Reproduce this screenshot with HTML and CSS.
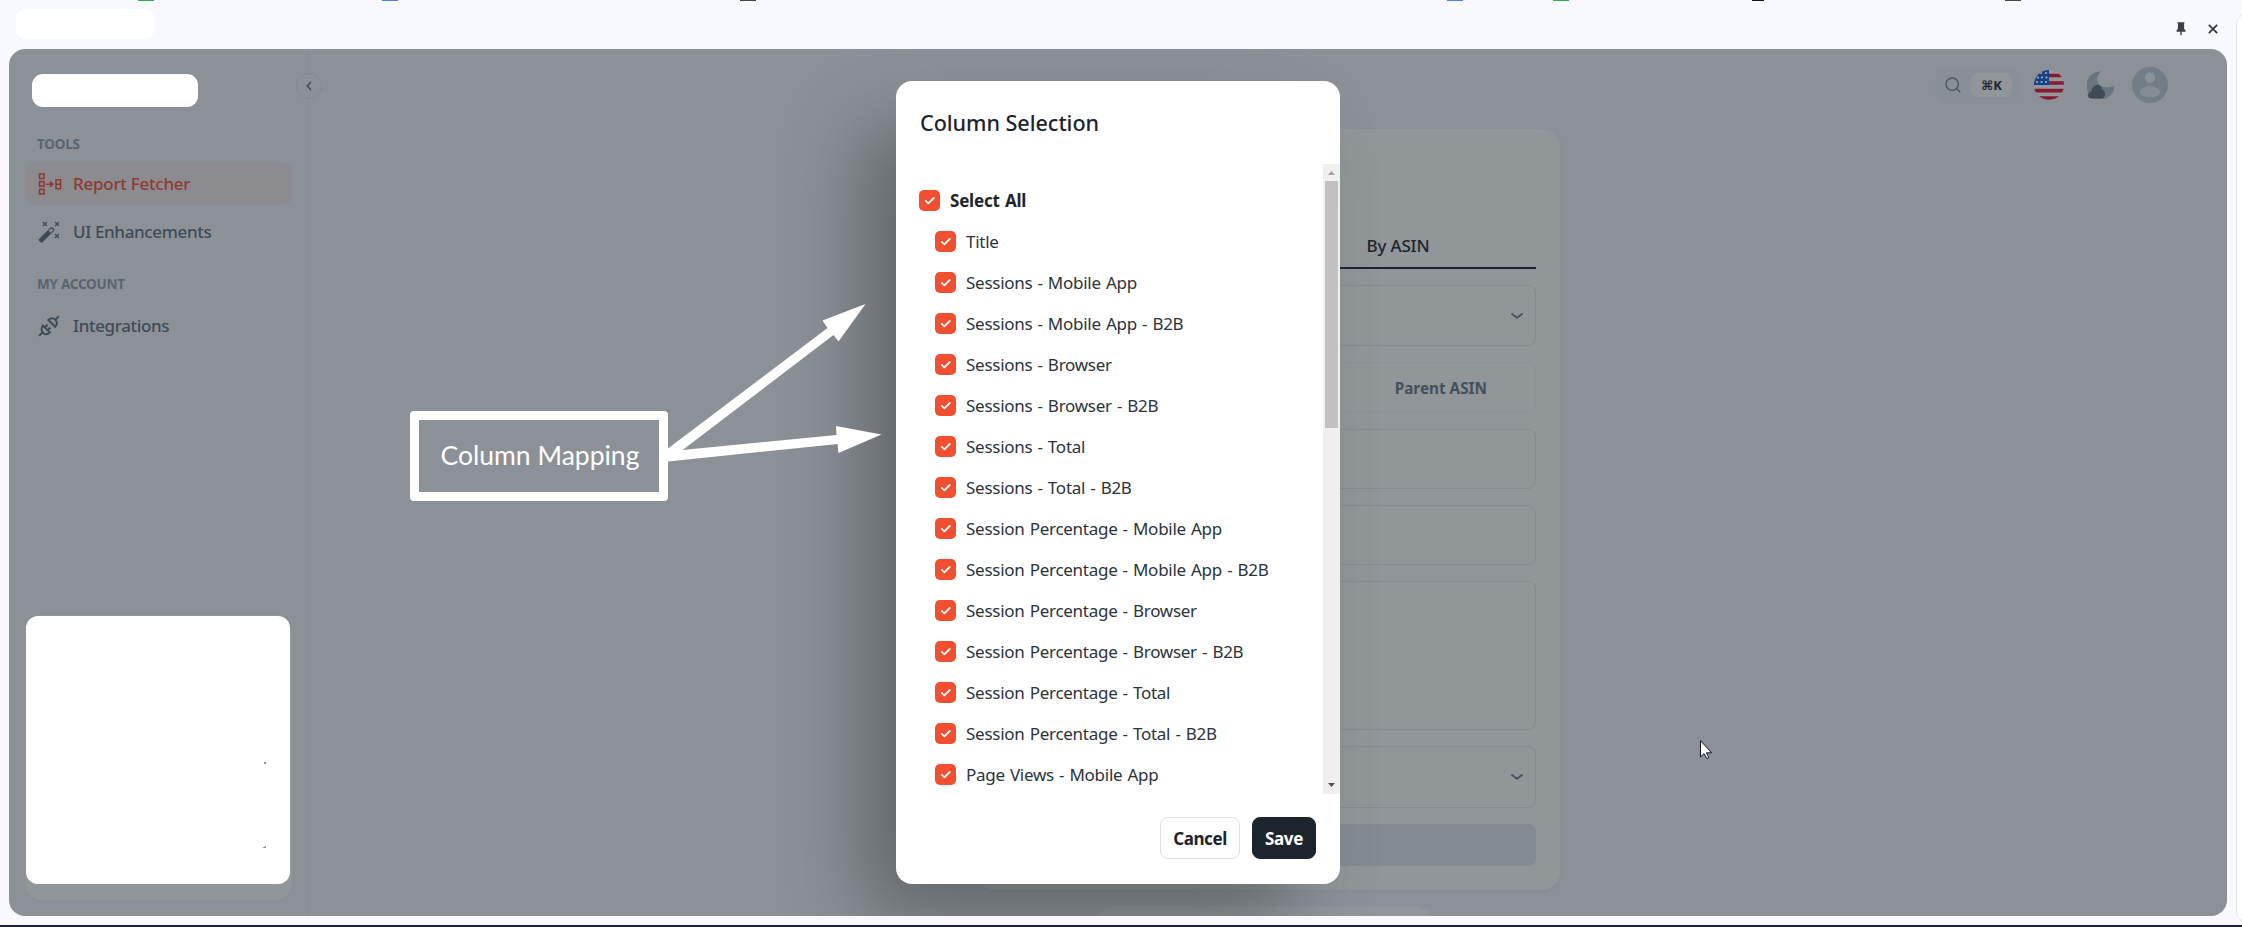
FILE: index.html
```html
<!DOCTYPE html>
<html lang="en">
<head>
<meta charset="utf-8">
<title>Column Selection</title>
<link rel="stylesheet" href="styles.css">
</head>
<body>
<svg class="defs" width="0" height="0">
  <symbol id="chev" viewBox="0 0 14 8"><path d="M2 2l5 3.800L12 2" fill="none" stroke="currentColor" stroke-width="1.800" stroke-linecap="round" stroke-linejoin="round"/></symbol>
</svg>
<div class="screen">
  <header class="panelbar">
    <i class="mark green m1"></i>
    <i class="mark blue m2"></i>
    <i class="mark m3"></i>
    <i class="mark blue m4"></i>
    <i class="mark green m5"></i>
    <i class="mark m6"></i>
    <i class="mark m7"></i>
    <span class="title-blank"></span>
    <div class="bar-actions">
      <svg width="10" height="14" viewBox="0 0 10 14"><path d="M1.500.3h7v1l-.4.3v5.200l1.400 1.600v1.400H.5V8.400l1.400-1.600V1.600l-.4-.3zM4.300 9.800h1.400V13.300h-1.400z" fill="#3c4043"/></svg>
      <svg width="10" height="10" viewBox="0 0 10 10"><path d="M.8.8l8.400 8.400M9.200.8L.8 9.200" stroke="#33363a" stroke-width="1.700"/></svg>
    </div>
  </header>
  <div class="neighbor"></div>

  <div class="app">
    <aside class="sidebar">
      <span class="logo-blank"></span>
      <h6 class="group">TOOLS</h6>
      <a class="nav active">
        <svg width="24" height="22" viewBox="0 0 24 22" fill="none" stroke="currentColor" stroke-width="1.600"><rect x="1.500" y="1" width="4.500" height="4.500"/><rect x="1.500" y="8.700" width="4.500" height="4.500"/><rect x="1.500" y="16.400" width="4.500" height="4.500"/><path d="M8 11.300h6M12 8.700l2.800 2.600-2.800 2.600M18 6.800h4.600v9H18zM18 11.300h4.600"/></svg>
        <span>Report Fetcher</span></a>
      <a class="nav">
        <svg width="24" height="22" viewBox="0 0 24 22"><path d="M.8 18.300L12.500 6.600a1.800 1.800 0 0 1 2.600 0l.8.800a1.800 1.800 0 0 1 0 2.600L4.200 21.600a1 1 0 0 1-1.300 0L.8 19.600a1 1 0 0 1 0-1.300z" fill="currentColor"/><path d="M10.800 9.800l2.700-2.600 1.800 1.800-2.700 2.700z" fill="#8c9198"/><path d="M5 1l4 4M9 1L5 5M17 1l4 4M21 1l-4 4M17 13l4 4M21 13l-4 4" stroke="currentColor" stroke-width="1.200"/></svg>
        <span>UI Enhancements</span></a>
      <h6 class="group second">MY ACCOUNT</h6>
      <a class="nav">
        <svg width="24" height="22" viewBox="0 0 24 22" fill="none" stroke="currentColor" stroke-width="2"><path d="M1.200 20.800l3-3M20.800 1.200l-3 3M5 10.600l6.800 6.800c-2 2.300-4.800 2.400-6.700.5s-2-5-.1-7.300zM10.400 5l6.800 6.800c2-2.300 2.100-5 .2-6.900s-4.700-2-7 .1zM7 12.500l2.500-2.800M9.800 15.300l2.500-2.800"/></svg>
        <span>Integrations</span></a>
      <div class="promo"><span class="promo-blank"><i class="speck s1"></i><i class="speck s2"></i></span></div>
    </aside>
    <button class="collapse"><svg width="6" height="10" viewBox="0 0 6 10"><path d="M5 1L1.300 5 5 9" fill="none" stroke="#3e4a55" stroke-width="1.500"/></svg></button>

    <main class="main">
      <div class="topbar">
        <div class="search">
          <svg width="16" height="16" viewBox="0 0 16 16" fill="none" stroke="#4b5761" stroke-width="1.400"><circle cx="7.200" cy="7.200" r="6.200"/><path d="M11.500 11.500l3.700 3.700"/></svg>
          <kbd>⌘K</kbd>
        </div>
        <svg class="flag" width="30" height="30" viewBox="0 0 30 30">
          <defs><clipPath id="fc"><circle cx="15" cy="15" r="15"/></clipPath></defs>
          <g clip-path="url(#fc)"><rect width="30" height="30" fill="#94979a"/><path d="M0 5.500h30M0 13h30M0 20.600h30M0 28h30" stroke="#841a34" stroke-width="3.700"/><rect width="15" height="15" fill="#154386"/>
          <g fill="#a5afbe"><circle cx="7" cy="3" r="1"/><circle cx="12" cy="3" r="1.100"/><circle cx="4" cy="7.500" r="1.100"/><circle cx="8" cy="7.500" r="1.100"/><circle cx="12.500" cy="7.500" r="1.100"/><circle cx="3" cy="12" r="1.100"/><circle cx="7.500" cy="12" r="1.100"/><circle cx="12" cy="12" r="1.100"/></g></g>
        </svg>
        <svg class="moon" width="28" height="28" viewBox="0 0 28 28"><path d="M14.500.5A14 14 0 1 0 27.500 14C23 18 12 17 10.300 9.500 9.700 6 11.500 2.500 14.500.5z" fill="#69757e"/><path d="M4.500 27.500C-.2 27.500-.2 21 4.500 20.500 4.500 12.500 14.800 12 15 18.500c4.200.5 4.200 9-.8 9z" fill="#3f4c58"/></svg>
        <svg class="avatar" width="36" height="36" viewBox="0 0 36 36"><circle cx="18" cy="18" r="18" fill="#717e87"/><circle cx="18" cy="10.500" r="5.200" fill="#8b939a"/><ellipse cx="18" cy="24.700" rx="10.300" ry="5.700" fill="#838d95"/></svg>
      </div>
      <section class="card">
        <div class="tab">By ASIN</div>
        <div class="field f1"><svg class="chev"><use href="#chev"/></svg></div>
        <div class="field f2"><span>Parent ASIN</span></div>
        <div class="field f3"></div>
        <div class="field f4"></div>
        <div class="field f5"></div>
        <div class="field f6"><svg class="chev"><use href="#chev"/></svg></div>
        <div class="submit"></div>
      </section>
      <section class="card next"></section>
    </main>

    <div class="dialog">
      <h2>Column Selection</h2>
      <div class="body">
        <ul>
          <li class="all"><i class="cb"></i>Select All</li>
          <li><i class="cb"></i>Title</li>
          <li><i class="cb"></i>Sessions - Mobile App</li>
          <li><i class="cb"></i>Sessions - Mobile App - B2B</li>
          <li><i class="cb"></i>Sessions - Browser</li>
          <li><i class="cb"></i>Sessions - Browser - B2B</li>
          <li><i class="cb"></i>Sessions - Total</li>
          <li><i class="cb"></i>Sessions - Total - B2B</li>
          <li><i class="cb"></i>Session Percentage - Mobile App</li>
          <li><i class="cb"></i>Session Percentage - Mobile App - B2B</li>
          <li><i class="cb"></i>Session Percentage - Browser</li>
          <li><i class="cb"></i>Session Percentage - Browser - B2B</li>
          <li><i class="cb"></i>Session Percentage - Total</li>
          <li><i class="cb"></i>Session Percentage - Total - B2B</li>
          <li><i class="cb"></i>Page Views - Mobile App</li>
        </ul>
        <div class="scroll">
          <svg width="17" height="17" viewBox="0 0 17 17"><path d="M5 11h7L8.500 7z" fill="#a3a3a3"/></svg>
          <span class="thumb"></span>
          <svg width="17" height="17" viewBox="0 0 17 17"><path d="M5 6h7l-3.500 4z" fill="#505050"/></svg>
        </div>
      </div>
      <footer><button class="cancel">Cancel</button><button class="save">Save</button></footer>
    </div>
  </div>

  <div class="callout">Column Mapping</div>
  <svg class="arrows" width="230" height="170" viewBox="0 0 230 170"><g fill="#fff"><path d="M2 153L167.500 28 162.500 20.500 205.500 4 178.500 41.500 173.500 35 20 152z"/><path d="M2 152L176.500 135 176 126 221.500 134.500 178.500 153 177.500 144 8 161.500C0 162-5 155 2 152z"/></g></svg>
  <svg class="cursor" width="13" height="20" viewBox="0 0 13 20"><path d="M.5.700v16.300l3.600-3.400 2.700 5 2-1-2.400-4.800h5.300z" fill="#fff" stroke="#111722"/></svg>
  <div class="taskbar"></div>
</div>
<script src="app.js"></script>
</body>
</html>
```

FILE: app.js
```js
// Put the tick into every checkbox.
document.querySelectorAll('.cb').forEach(function (el) {
  el.innerHTML = '<svg width="21" height="21" viewBox="0 0 21 21"><path d="M6.800 10.900l2.600 2.500 5.300-5.400" fill="none" stroke="#fff" stroke-width="1.800" stroke-linecap="round" stroke-linejoin="round"/></svg>';
});
```

FILE: styles.css
```css
* { box-sizing: border-box; }
html, body { height: 927px; overflow: hidden; }
body { margin: 0; background: #f8f9ff; font-family: "Noto Sans", "Open Sans", sans-serif; color: #1c252e; }
.defs { position: absolute; }
.screen { position: relative; width: 2242px; height: 927px; overflow: hidden; display: flex; flex-direction: column; }
.panelbar { height: 49px; flex: none; display: flex; justify-content: space-between; padding: 9px 24px 0 16px; position: relative; }
.mark { position: absolute; top: 0; width: 16px; height: 1px; background: #44474a; }
.green { background: #34a853; }
.blue { background: #4285f4; }
.m1 { left: 138px; }
.m2 { left: 382px; }
.m3 { left: 740px; }
.m4 { left: 1447px; }
.m5 { left: 1553px; }
.m6 { left: 1752px; width: 12px; background: #15171a; }
.m7 { left: 2005px; }
.title-blank { width: 139px; height: 30px; border-radius: 11px; background: #fff; }
.bar-actions { display: flex; align-items: center; align-self: flex-start; gap: 22px; height: 22px; margin-top: 9px; }
.neighbor { position: absolute; left: 2236px; top: 14px; width: 20px; height: 908px; background: #fff; border: 1px solid #dfe5f2; border-radius: 12px; }
.app { position: relative; width: 2218px; height: 867px; margin-left: 9px; flex: none; display: flex; background: #8c9198; border-radius: 16px; overflow: hidden; }
.sidebar { width: 300px; border-right: 1px solid #848b92; padding: 25px 16px 16px; display: flex; flex-direction: column; color: #3e4b57; }
.logo-blank { width: 166px; height: 33px; margin-left: 7px; border-radius: 11px; background: #fff; flex: none; }
.group { margin: 27px 0 0 12px; height: 21px; line-height: 21px; font-size: 13.500px; font-weight: 700; letter-spacing: -.25px; color: #58656f; }
.group.second { margin-top: 21px; }
.nav { display: flex; align-items: center; gap: 11px; height: 43px; padding-left: 13px; border-radius: 9px; font-size: 17px; font-weight: 500; letter-spacing: -.35px; margin-top: 5px; }
.nav.active { margin-top: 7px; background: #8c8b8f; color: #8f3a31; letter-spacing: -.25px; }
.group.second + .nav { margin-top: 9px; }
.promo { margin-top: auto; width: 267px; height: 285px; border-radius: 16px; background: #919699; padding: 1px 1px 0; box-shadow: 0 0 2px #858b90; }
.promo-blank { position: relative; display: block; width: 264px; height: 268px; border-radius: 12px; background: #fff; }
.speck { position: absolute; background: #8b8f92; }
.s1 { left: 238px; top: 146px; width: 2px; height: 2px; }
.s2 { left: 236px; top: 230px; width: 4px; height: 2px; clip-path: polygon(0 100%, 100% 0, 100% 100%); }
.collapse { position: absolute; left: 287px; top: 24px; width: 26px; height: 26px; border: 1px solid #848a92; border-radius: 50%; background: #8c9198; padding: 0; display: flex; align-items: center; justify-content: center; }
.main { flex: 1; display: flex; flex-direction: column; align-items: center; }
.topbar { align-self: stretch; height: 80px; flex: none; padding: 18px 59px 0 0; display: flex; justify-content: flex-end; align-items: flex-start; }
.search { width: 85px; height: 36px; border-radius: 12px; background: #888f96; display: flex; align-items: center; padding-left: 10px; gap: 10px; }
kbd { width: 41px; height: 24px; border-radius: 6px; background: #919699; text-align: center; font: 700 13px/24px "Noto Sans", "DejaVu Sans", sans-serif; }
.flag { margin: 3px 0 0 14px; }
.moon { margin: 4px 0 0 23px; }
.avatar { margin-left: 17px; }
.card { width: 584px; height: 761px; flex: none; border-radius: 18px; background: #919699; padding: 81px 24px 24px; box-shadow: 0 1px 3px #858b91; }
.card.next { width: 336px; height: 60px; margin: 16px 8px 0 0; box-shadow: none; }
.tab { width: 276px; height: 59px; margin-left: auto; border-bottom: 2px solid #1c252e; text-align: center; line-height: 71px; font-size: 17px; font-weight: 500; letter-spacing: -.2px; }
.field { border: 1px solid #858c91; border-radius: 8px; margin-top: 16px; display: flex; align-items: center; justify-content: flex-end; }
.chev { width: 14px; height: 8px; margin-right: 11px; color: #45525e; }
.f1 { height: 61px; }
.f2 { height: 51px; border-color: #8c9297; font-size: 15.300px; font-weight: 700; color: #43505c; padding-right: 48px; }
.f3, .f4 { height: 60px; }
.f5 { height: 149px; }
.f6 { height: 62px; }
.submit { height: 42px; margin-top: 16px; border-radius: 8px; background: #838b91; }
.dialog { position: absolute; left: 887px; top: 32px; width: 444px; height: 803px; border-radius: 16px; background: #fff; box-shadow: -40px 40px 80px -8px rgba(50,55,52,.48); display: flex; flex-direction: column; }
h2 { margin: 0; height: 83px; padding: 22px 24px; font-size: 21.600px; line-height: 40px; font-weight: 500; letter-spacing: -.05px; }
.body { height: 630px; display: flex; justify-content: space-between; }
ul { margin: 0; padding: 16px 0 0 39px; list-style: none; font-size: 17px; }
li { display: flex; align-items: center; gap: 10px; height: 41px; white-space: nowrap; letter-spacing: -.27px; word-spacing: 1px; color: #2b333b; }
.all { margin-left: -16px; font-weight: 700; color: #1c252e; letter-spacing: -.2px; }
.cb { width: 21px; height: 21px; border-radius: 5px; background: #f14f2f; flex: none; }
.cb svg { display: block; }
.scroll { width: 17px; background: #f0f0f0; display: flex; flex-direction: column; }
.thumb { width: 13px; height: 247px; margin: 0 2px auto; background: #c1c1c1; flex: none; }
footer { flex: 1; display: flex; justify-content: flex-end; gap: 12px; padding: 23px 24px 0; }
footer button { height: 42px; border-radius: 8px; border: 1px solid #dce0e4; background: #fff; color: #1c252e; font: 700 17px "Noto Sans", sans-serif; letter-spacing: -.4px; padding: 0; }
.cancel { width: 80px; }
footer .save { width: 64px; background: #1c252e; color: #fff; border-color: #1c252e; }
.callout { position: absolute; left: 410px; top: 411px; width: 258px; height: 90px; border: 9px solid #fff; border-radius: 4px; color: #fff; font: 400 26.500px/70px Lato, "Open Sans", sans-serif; padding-left: 2px; text-align: center; white-space: nowrap; }
.arrows { position: absolute; left: 660px; top: 300px; }
.cursor { position: absolute; left: 1700px; top: 740px; }
.taskbar { position: absolute; left: 0; top: 925px; width: 100%; height: 2px; background: #1d2036; }
```
